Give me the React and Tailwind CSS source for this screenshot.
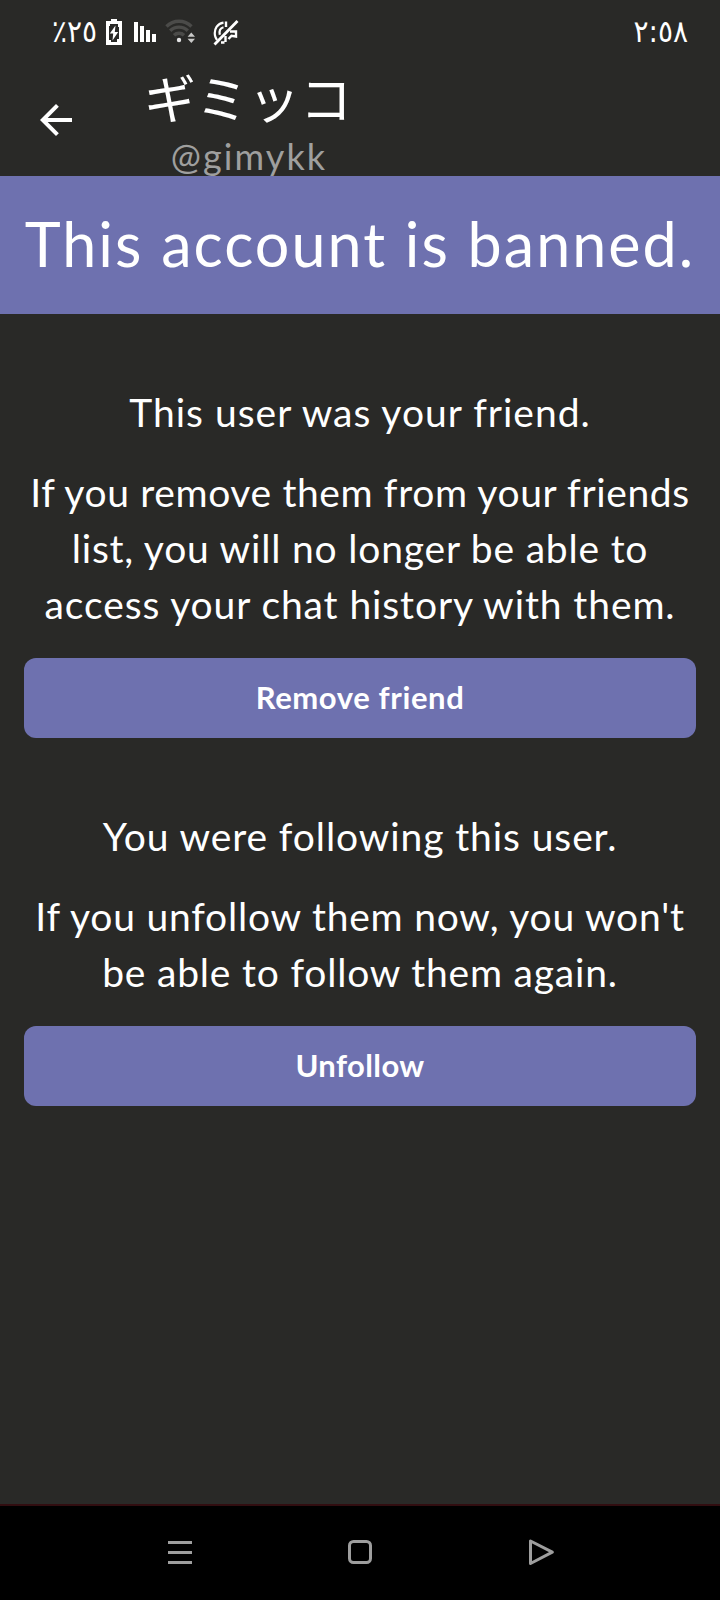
import React from 'react';

const friendLines = [
  { text: 'If you remove them from your friends', tracking: 'tracking-[0.62px]' },
  { text: 'list, you will no longer be able to', tracking: 'tracking-[0.8px]' },
  { text: 'access your chat history with them.', tracking: 'tracking-[0.9px]' }
];

const followLines = [
  { text: "If you unfollow them now, you won't", tracking: 'tracking-[0.78px]' },
  { text: 'be able to follow them again.', tracking: 'tracking-[0.8px]' }
];

function BatteryIcon() {
  return (
    <svg width="16" height="26" viewBox="0 0 16 26" className="shrink-0">
      <path d="M5 0h6v2h5v24H0V2h5z" fill="#fff" />
      <path d="M4 5h8v3h1v12h-2v3H5v-2H3V7h1z" fill="#292927" />
      <path d="M9.5 6.5 3.8 14.5h3.4L6.5 21.5l5.7-8.5H8.8z" fill="#fff" />
    </svg>
  );
}

function SignalIcon() {
  return (
    <svg width="22" height="20" viewBox="0 0 22 20" className="shrink-0" fill="#fff">
      <rect x="0" y="0" width="4" height="20" />
      <rect x="6" y="4" width="4" height="16" />
      <rect x="12" y="8" width="4" height="12" />
      <rect x="18" y="12" width="4" height="8" />
    </svg>
  );
}

function WifiIcon() {
  return (
    <svg width="30" height="24" viewBox="0 0 30 24" className="shrink-0">
      <g fill="none" stroke="#4b4b49" strokeWidth="3.4">
        <path d="M1.5 7.5a17.5 17.5 0 0 1 25 0" />
        <path d="M5.2 11.8a12.4 12.4 0 0 1 17.6 0" />
        <path d="M9 16.2a7.2 7.2 0 0 1 10 0" />
      </g>
      <circle cx="14" cy="21" r="2.2" fill="#e4e4e4" />
      <path d="M26.3 13.500l3.700 4.300h-7.400zM26.300 24l3.700-4.300h-7.400z" fill="#c9c9c8" />
    </svg>
  );
}

// Vibration / ringer off
function MutedIcon() {
  return (
    <svg width="26" height="26" viewBox="0 0 26 26" className="shrink-0" fill="none" stroke="#fff">
      <path d="M10.500 2.600C4.500 3.500.8 9 2 15.500c.3 1.700 1 3.200 2 4.500" strokeWidth="2.200" />
      <path d="M10.500 7.200C7.500 8 6 11 6.800 14.800" strokeWidth="2.200" />
      <path d="M13 1.500v5.500M8 22.500h3.500M12.500 16v6" strokeWidth="2.400" />
      <path d="M17 11.500h6v5l-4.500-.8-3 3.300" strokeWidth="2.400" />
      <path d="M24.500 1 1.500 24.500" strokeWidth="2.800" />
    </svg>
  );
}

function StatusBar() {
  return (
    <div className="h-16 shrink-0 flex items-start justify-between text-white font-['DejaVu_Sans',sans-serif]">
      <div className="flex items-start">
        <span className="ml-[52px] mt-[14px] w-[46px] text-[28px] leading-[36px] whitespace-nowrap scale-y-110">٪٢٥</span>
        <div className="ml-2 mt-[19px]">
          <BatteryIcon />
        </div>
        <div className="ml-3 mt-[22px]">
          <SignalIcon />
        </div>
        <div className="ml-[9px] mt-[19px]">
          <WifiIcon />
        </div>
        <div className="ml-[18px] mt-[20px]">
          <MutedIcon />
        </div>
      </div>
      <span className="mr-[32px] mt-[14px] text-[28px] leading-[36px] whitespace-nowrap scale-y-110">٢:٥٨</span>
    </div>
  );
}

function Header() {
  return (
    <header className="h-28 shrink-0 flex items-start">
      <button className="ml-8 mt-8 size-12">
        <svg width="48" height="48" viewBox="0 0 24 24" fill="#fff">
          <path d="M20 11H7.830l5.590-5.590L12 4l-8 8 8 8 1.410-1.410L7.830 13H20v-2z" />
        </svg>
      </button>
      <div className="ml-[58px] w-[220px] flex flex-col items-center whitespace-nowrap">
        <h1 className="h-[70px] text-[52px] leading-[65px] text-white font-['Noto_Sans_CJK_JP',sans-serif]">ギミッコ</h1>
        <p className="pl-[2px] text-[36px] leading-[44px] tracking-[2.1px] text-[#9f9f9e]">@gimykk</p>
      </div>
    </header>
  );
}

function Section({ title, titleTracking, lines, action, actionTracking }) {
  return (
    <section className="pt-[70px] px-6 flex flex-col text-center text-white">
      <h2 className={`text-[39px] leading-[56px] whitespace-nowrap ${titleTracking}`}>{title}</h2>
      <div className="mt-6 text-[39px] leading-[56px]">
        {lines.map((line) => (
          <p key={line.text} className={`whitespace-nowrap ${line.tracking}`}>
            {line.text}
          </p>
        ))}
      </div>
      <button className={`mt-[26px] h-20 pb-[2px] rounded-xl bg-[#6e71af] text-[31px] leading-[40px] font-bold ${actionTracking}`}>
        {action}
      </button>
    </section>
  );
}

function NavBar() {
  return (
    <nav className="h-24 shrink-0 border-t-2 border-[#310d10] bg-black flex items-start justify-center gap-[152px] pt-8">
      <svg width="28" height="30" viewBox="0 0 28 30" fill="#9e9e9e">
        <path d="M2 3h24v3H2zM2 13h24v3H2zM2 23h24v3H2z" />
      </svg>
      <svg width="28" height="30" viewBox="0 0 28 30" fill="none" stroke="#9e9e9e" strokeWidth="3">
        <rect x="3.500" y="3.500" width="21" height="21" rx="4" />
      </svg>
      <svg width="28" height="30" viewBox="0 0 28 30" fill="none" stroke="#9e9e9e" strokeWidth="3" strokeLinejoin="round">
        <path d="M4.500 3v22.500L26.300 14.200z" />
      </svg>
    </nav>
  );
}

export default function App() {
  return (
    <div className="w-[720px] h-[1600px] overflow-hidden flex flex-col bg-[#292927] font-['Lato',sans-serif]">
      <StatusBar />
      <Header />
      {/* relative so the banner paints over the handle's descenders */}
      <div className="relative h-[138px] shrink-0 pb-[3px] bg-[#6e71af] flex items-center justify-center">
        <p className="text-[61px] leading-[76px] tracking-[2.05px] text-white whitespace-nowrap">
          This account is banned.
        </p>
      </div>
      <main className="flex-1">
        <Section
          title="This user was your friend."
          titleTracking="tracking-[1px]"
          lines={friendLines}
          action="Remove friend"
          actionTracking="tracking-[0.6px]"
        />
        <Section
          title="You were following this user."
          titleTracking="tracking-[0.9px]"
          lines={followLines}
          action="Unfollow"
          actionTracking="tracking-[0.4px]"
        />
      </main>
      <NavBar />
    </div>
  );
}
